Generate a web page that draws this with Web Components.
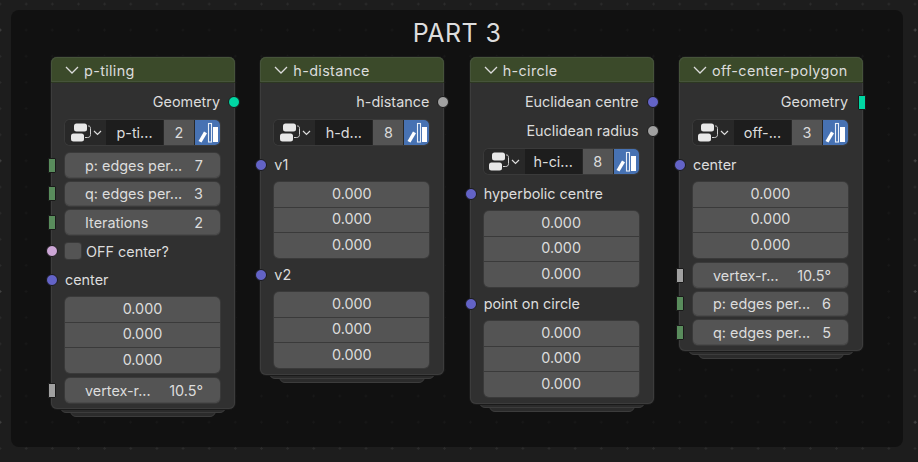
<!DOCTYPE html>
<html>
<head>
<meta charset="utf-8">
<title>PART 3</title>
<style>
  html, body { margin: 0; padding: 0; background: #1d1d1d; }
  body { font-family: "Inter", "Liberation Sans", sans-serif; color: #dcdcdc; }
</style>
</head>
<body>

<node-canvas>
  <node-frame label="PART 3">

    <node-box name="p-tiling">
      <node-output socket="geometry">Geometry</node-output>
      <node-group name="p-ti..." users="2"></node-group>
      <node-field socket="int" label="p: edges per..." value="7"></node-field>
      <node-field socket="int" label="q: edges per..." value="3"></node-field>
      <node-field socket="int" label="Iterations" value="2"></node-field>
      <node-check>OFF center?</node-check>
      <node-input>center</node-input>
      <node-vector></node-vector>
      <node-field socket="float" label="vertex-r..." value="10.5°"></node-field>
    </node-box>

    <node-box name="h-distance">
      <node-output socket="float">h-distance</node-output>
      <node-group name="h-d..." users="8"></node-group>
      <node-input>v1</node-input>
      <node-vector></node-vector>
      <node-input>v2</node-input>
      <node-vector></node-vector>
    </node-box>

    <node-box name="h-circle">
      <node-output socket="vector">Euclidean centre</node-output>
      <node-output socket="float">Euclidean radius</node-output>
      <node-group name="h-ci..." users="8"></node-group>
      <node-input>hyperbolic centre</node-input>
      <node-vector></node-vector>
      <node-input>point on circle</node-input>
      <node-vector></node-vector>
    </node-box>

    <node-box name="off-center-polygon">
      <node-output socket="geometry-bar">Geometry</node-output>
      <node-group name="off-..." users="3"></node-group>
      <node-input>center</node-input>
      <node-vector></node-vector>
      <node-field socket="float" label="vertex-r..." value="10.5°"></node-field>
      <node-field socket="int" label="p: edges per..." value="6"></node-field>
      <node-field socket="int" label="q: edges per..." value="5"></node-field>
    </node-box>

  </node-frame>
</node-canvas>

<script>
// Shared look of the sockets that sit on the node edges
const socketStyles = `
  .socket {
    position: absolute;
    top: 50%;
    box-sizing: border-box;
    width: 12px;
    height: 12px;
    margin-top: -6px;
    border-radius: 50%;
    border: 1px solid #1a1a1a;
  }
  .socket.left { left: -19px; }
  .socket.right { right: -20px; }
  .socket.vector { background: #6363c7; }
  .socket.geometry { background: #00d6a3; }
  .socket.bool { background: #cca6d6; }
  .socket.float { background: #a1a1a1; }
  .socket.bar {
    width: 8px;
    height: 15px;
    margin-top: -7.5px;
    border-radius: 1px;
  }
  .socket.bar.left { left: -17px; }
  .socket.bar.right { right: -18px; }
  .socket.int { background: #598c5c; }
  .socket.geometry-bar { background: #00d6a3; }
  .socket.float-bar { background: #a1a1a1; }
`;

class NodeCanvas extends HTMLElement {
  constructor() {
    super();
    this.attachShadow({ mode: "open" }).innerHTML = `
      <style>
        :host {
          display: block;
          box-sizing: border-box;
          width: 918px;
          height: 462px;
          overflow: hidden;
          padding: 10px 15px 15px 11px;
          background-color: #1d1d1d;
          background-image:
            radial-gradient(circle at center, #414141 0, #414141 1px, transparent 1.4px),
            radial-gradient(circle at center, #2b2b2b 0, #2b2b2b 1px, transparent 1.4px);
          background-size: 130.75px 130.75px, 26.15px 26.15px;
          background-position: -65.4px -35.4px, -13px -9px;
        }
      </style>
      <slot></slot>`;
  }
}

class NodeFrame extends HTMLElement {
  constructor() {
    super();
    this.attachShadow({ mode: "open" }).innerHTML = `
      <style>
        :host {
          display: block;
          box-sizing: border-box;
          height: 437px;
          border-radius: 8px;
          background-color: #111111;
          background-image: radial-gradient(circle at center, #181818 0, #181818 1px, transparent 1.4px);
          background-size: 26.15px 26.15px;
          background-position: 2px 7px;
        }
        .label {
          height: 47px;
          padding-top: 8px;
          box-sizing: border-box;
          text-align: center;
          font-size: 25px;
          line-height: 30px;
          color: #dddddd;
          letter-spacing: 0.4px;
        }
        .nodes {
          display: flex;
          align-items: flex-start;
          gap: 25.33px;
          padding-left: 40px;
        }
      </style>
      <div class="label"></div>
      <div class="nodes"><slot></slot></div>`;
    this.shadowRoot.querySelector(".label").textContent = this.getAttribute("label");
  }
}

class NodeBox extends HTMLElement {
  constructor() {
    super();
    this.attachShadow({ mode: "open" }).innerHTML = `
      <style>
        :host {
          display: block;
          position: relative;
          box-sizing: border-box;
          flex: 0 0 auto;
          width: 184px;
          font-size: 14.4px;
          color: #dcdcdc;
        }
        .card {
          position: relative;
          z-index: 2;
          border-radius: 6px;
          background: #303030;
          box-shadow: 0 0 0 1px #1a1a1a, inset 0 0 0 1px #3c3c3c;
        }
        .head {
          display: flex;
          align-items: center;
          height: 26px;
          padding: 1px 0 0 14px;
          gap: 5px;
          border-radius: 6px 6px 0 0;
          background: #3b4a2a;
          box-shadow: inset 0 0 0 1px #46543a;
          box-sizing: border-box;
          border-bottom: 1px solid #2d3822;
          letter-spacing: 0.35px;
          white-space: nowrap;
        }
        svg { flex: none; display: block; }
        .body {
          padding: 9px 15px 2px 14px;
        }
        /* stacked cards under a node group */
        .stack {
          position: absolute;
          border-radius: 0 0 6px 6px;
          background: #2b2b2b;
          border: 1px solid #3c3c3c;
          box-sizing: border-box;
          height: 14px;
        }
        .s1 { left: 9px; right: 9px; bottom: -4px; z-index: 1; }
        .s2 { left: 19px; right: 19px; bottom: -8px; z-index: 0; }
      </style>
      <div class="stack s2"></div>
      <div class="stack s1"></div>
      <div class="card">
        <div class="head">
          <svg width="14" height="10" viewBox="0 0 14 10" fill="none" stroke="#dcdcdc" stroke-width="1.3"><path d="M1 2l6 6 6-6"/></svg>
          <span class="title"></span>
        </div>
        <div class="body"><slot></slot></div>
      </div>`;
    this.shadowRoot.querySelector(".title").textContent = this.getAttribute("name");
  }
}

class NodeOutput extends HTMLElement {
  constructor() {
    super();
    this.attachShadow({ mode: "open" }).innerHTML = `
      <style>
        :host {
          display: block;
          position: relative;
          height: 20px;
          margin-bottom: 8px;
          text-align: right;
          line-height: 20px;
        }
        :host(:nth-of-type(2)) { margin-top: 9px; }
        ${socketStyles}
      </style>
      <slot></slot><span class="socket right"></span>`;
    const type = this.getAttribute("socket");
    const sock = this.shadowRoot.querySelector(".socket");
    sock.classList.add(type);
    if (type.endsWith("-bar")) sock.classList.add("bar");
  }
}

class NodeInput extends HTMLElement {
  constructor() {
    super();
    this.attachShadow({ mode: "open" }).innerHTML = `
      <style>
        :host {
          display: block;
          position: relative;
          box-sizing: border-box;
          height: 21px;
          padding-top: 2px;
          margin: 5px 0 8px;
          line-height: 20px;
        }
        ${socketStyles}
        .socket.left { margin-top: -5px; }
      </style>
      <span class="socket left vector"></span><slot></slot>`;
  }
}

class NodeCheck extends HTMLElement {
  constructor() {
    super();
    this.attachShadow({ mode: "open" }).innerHTML = `
      <style>
        :host {
          display: flex;
          position: relative;
          align-items: center;
          gap: 5px;
          height: 20px;
          margin: 6.5px 0 7px;
        }
        .box {
          width: 16px;
          height: 16px;
          border-radius: 3px;
          background: #545454;
          box-shadow: 0 0 0 1px #3a3a3a;
        }
        ${socketStyles}
      </style>
      <span class="socket left bool"></span>
      <span class="box"></span>
      <slot></slot>`;
  }
}

class NodeField extends HTMLElement {
  constructor() {
    super();
    this.attachShadow({ mode: "open" }).innerHTML = `
      <style>
        :host {
          display: flex;
          position: relative;
          align-items: center;
          justify-content: space-between;
          box-sizing: border-box;
          height: 24.5px;
          margin-bottom: 4px;
          padding: 0 17px 0 20px;
          border-radius: 5px;
          background: #545454;
          box-shadow: inset 0 -1px 0 #4a4a4a, 0 0 0 1px #3a3a3a;
          white-space: nowrap;
        }
        ${socketStyles}
      </style>
      <span class="socket left bar"></span>
      <span class="label"></span>
      <span class="value"></span>`;
    const type = this.getAttribute("socket");
    this.shadowRoot.querySelector(".socket").classList.add(type === "float" ? "float-bar" : type);
    this.shadowRoot.querySelector(".label").textContent = this.getAttribute("label");
    this.shadowRoot.querySelector(".value").textContent = this.getAttribute("value");
  }
}

class NodeVector extends HTMLElement {
  constructor() {
    super();
    this.attachShadow({ mode: "open" }).innerHTML = `
      <style>
        :host {
          display: block;
          height: 76px;
          margin-bottom: 5px;
          border-radius: 5px;
          overflow: hidden;
          background: #3a3a3a;
          box-shadow: 0 0 0 1px #3a3a3a;
        }
        .cells {
          display: grid;
          grid-template-rows: repeat(3, 1fr);
          gap: 1px;
          height: 100%;
        }
        .cells div {
          display: flex;
          align-items: center;
          justify-content: center;
          padding-bottom: 2px;
          background: #545454;
        }
      </style>
      <div class="cells"><div>0.000</div><div>0.000</div><div>0.000</div></div>`;
  }
}

class NodeGroup extends HTMLElement {
  constructor() {
    super();
    this.attachShadow({ mode: "open" }).innerHTML = `
      <style>
        :host {
          display: grid;
          grid-template-columns: 40px 1fr 30px 25px;
          gap: 1px;
          height: 25px;
          margin-bottom: 8px;
          border-radius: 5px;
          overflow: hidden;
          background: #282828;
          box-shadow: 0 0 0 1px #3a3a3a;
        }
        div { display: flex; align-items: center; justify-content: center; }
        .pick { background: #282828; gap: 1px; padding-left: 1px; }
        .name { background: #1d1d1d; }
        .users { background: #545454; }
        .fake { background: #4772b3; }
      </style>
      <div class="pick">
        <svg width="22" height="21" viewBox="0 0 22 21" fill="none">
          <rect x="4" y="1.500" width="13" height="8" rx="2.500" fill="#e8e8e8"/>
          <rect x="1" y="11.500" width="13" height="8" rx="2.500" fill="#e8e8e8"/>
          <path d="M18 4h.5c1.500 0 2 1 2 2.500v6c0 2-1 3-3 3H15" stroke="#cfcfcf" stroke-width="1"/>
        </svg>
        <svg width="9" height="6" viewBox="0 0 9 6" fill="none" stroke="#dcdcdc" stroke-width="1.2"><path d="M1 1l3.500 3.500L8 1"/></svg>
      </div>
      <div class="name"></div>
      <div class="users"></div>
      <div class="fake">
        <svg width="22" height="21" viewBox="0 0 22 21">
          <path d="M1.500 19 7 9.500l3 1.700L4.500 20.500z" fill="#ffffff"/>
          <rect x="11.500" y="1.500" width="3" height="18.500" fill="none" stroke="#e8eef8" stroke-width="1.100"/>
          <rect x="16" y="5" width="5" height="15" fill="#ffffff"/>
        </svg>
      </div>`;
    this.shadowRoot.querySelector(".name").textContent = this.getAttribute("name");
    this.shadowRoot.querySelector(".users").textContent = this.getAttribute("users");
  }
}

customElements.define("node-canvas", NodeCanvas);
customElements.define("node-frame", NodeFrame);
customElements.define("node-box", NodeBox);
customElements.define("node-output", NodeOutput);
customElements.define("node-input", NodeInput);
customElements.define("node-check", NodeCheck);
customElements.define("node-field", NodeField);
customElements.define("node-vector", NodeVector);
customElements.define("node-group", NodeGroup);
</script>
</body>
</html>
